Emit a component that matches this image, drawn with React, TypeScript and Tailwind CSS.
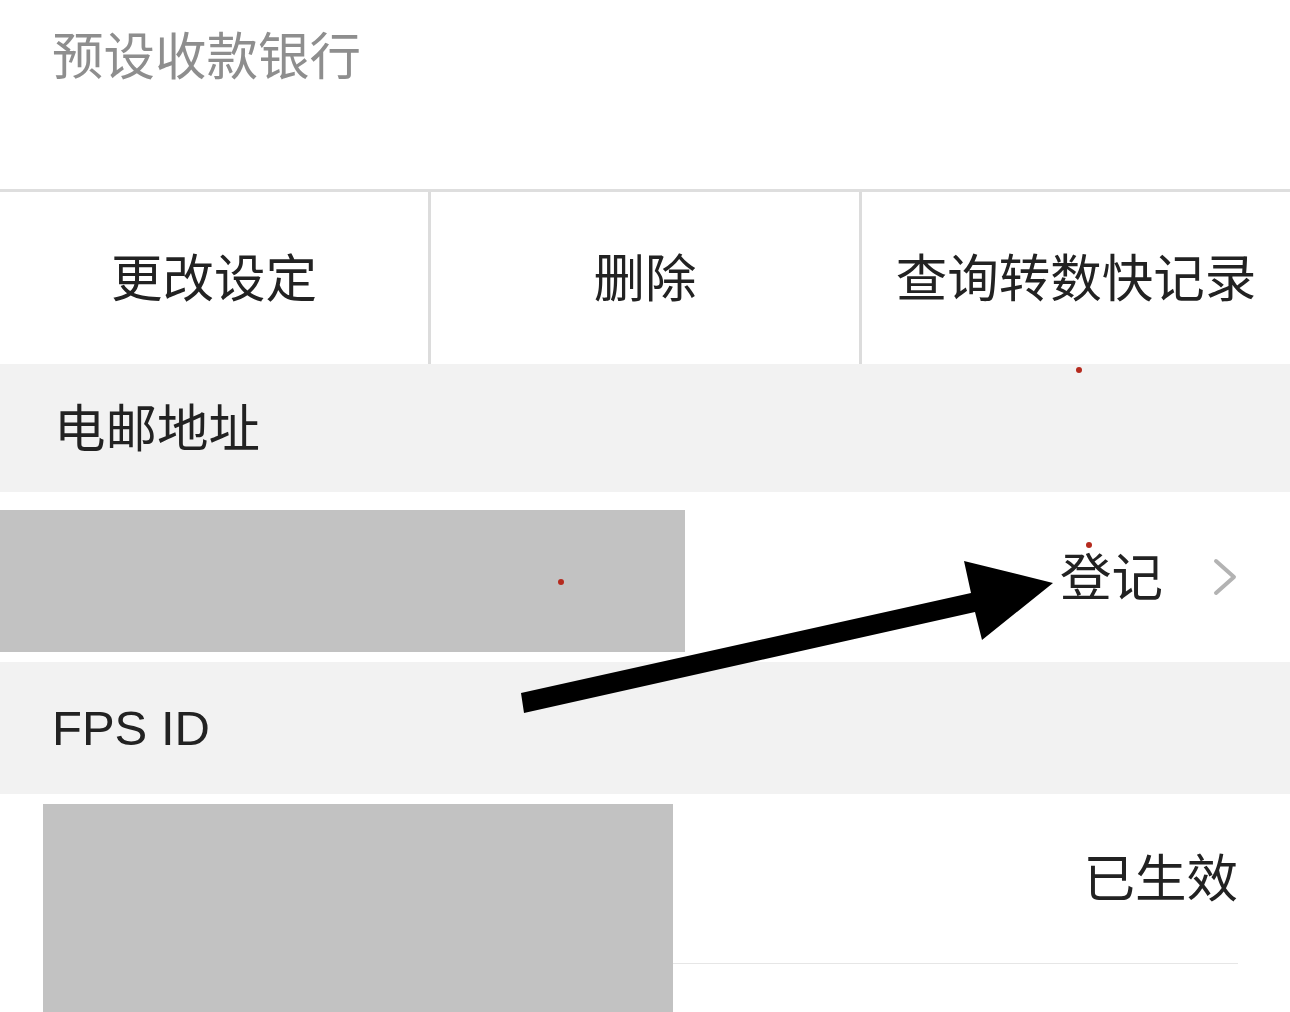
import React from "react";

export default function App() {
  return (
    <div className="relative w-[1290px] h-[1012px] overflow-hidden bg-white font-['Noto_Sans_CJK_SC',sans-serif] text-[#222222]">
      {/* Title area */}
      <div className="h-[189px] pl-[52px] pt-[27px] text-[51.5px] leading-[52px] text-[#8e8e8e]">
        预设收款银行
      </div>
      <div className="h-[3px] bg-[#dedede]" />

      {/* Action buttons */}
      <div className="flex h-[172px] text-[51.5px] leading-[52px]">
        <div className="flex-1 flex items-center justify-center pb-[7px]">更改设定</div>
        <div className="w-[3px] bg-[#dcdcdc]" />
        <div className="flex-1 flex items-center justify-center pb-[7px]">删除</div>
        <div className="w-[3px] bg-[#dcdcdc]" />
        <div className="flex-1 flex items-center justify-center pb-[7px]">查询转数快记录</div>
      </div>

      {/* Email section header */}
      <div className="h-[128px] bg-[#f2f2f2] flex items-center pl-[54px] pb-[6px] text-[51.5px] leading-[52px]">
        电邮地址
      </div>

      {/* Email row */}
      <div className="h-[170px] flex items-start">
        <div className="mt-[18px] w-[685px] h-[142px] bg-[#c2c2c2]" />
        <div className="flex-1 h-full flex items-center justify-end pr-[53px]">
          <span className="text-[51.5px] leading-[52px] pb-[6px]">登记</span>
          <svg width="24" height="38" viewBox="0 0 24 38" className="ml-[50px]">
            <polyline
              points="3,3 21,19 3,35"
              fill="none"
              stroke="#b3b3b3"
              strokeWidth="4"
              strokeLinecap="round"
              strokeLinejoin="round"
            />
          </svg>
        </div>
      </div>

      {/* FPS ID header */}
      <div className="h-[132px] bg-[#f2f2f2] flex items-center pl-[52px] font-['Liberation_Sans',sans-serif] text-[49px] leading-[49px]">
        FPS ID
      </div>

      {/* FPS row */}
      <div className="flex items-start pl-[43px]">
        <div className="mt-[10px] w-[630px] h-[230px] bg-[#c2c2c2]" />
        <div className="flex-1 mr-[52px] h-[170px] border-b border-[#e6e6e6] flex items-center justify-end">
          <span className="text-[51.5px] leading-[52px] pb-[8px]">已生效</span>
        </div>
      </div>

      {/* Annotation overlay */}
      <svg
        className="absolute inset-0 pointer-events-none"
        width="1290"
        height="1012"
        viewBox="0 0 1290 1012"
      >
        <polygon
          points="521,693 971,593 964,561 1053,583 982,640 975,612 524,713"
          fill="#000000"
        />
        <circle cx="1079" cy="370" r="3" fill="#b52a1e" />
        <circle cx="561" cy="582" r="3" fill="#b52a1e" />
        <circle cx="1089" cy="545" r="3" fill="#b52a1e" />
      </svg>
    </div>
  );
}
